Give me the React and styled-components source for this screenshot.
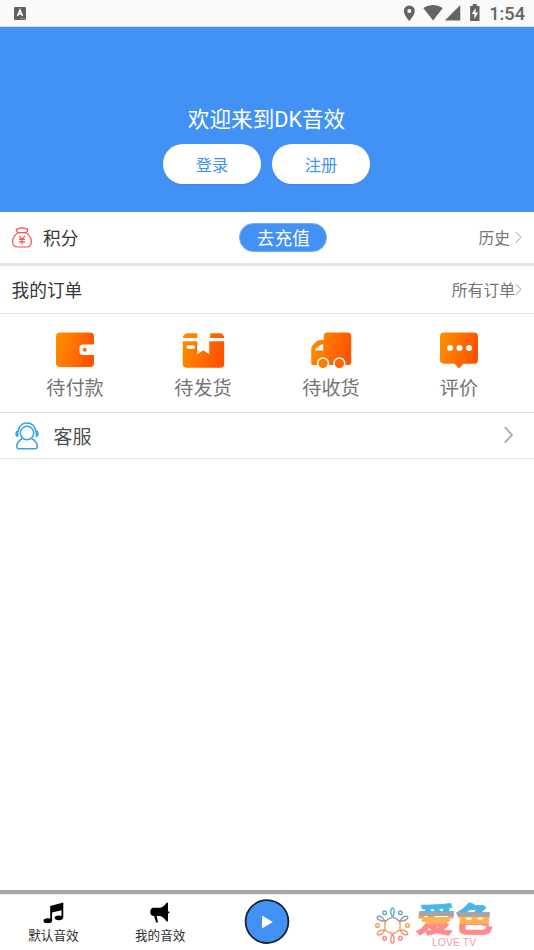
import React from "react";
import styled, { createGlobalStyle } from "styled-components";

const GlobalStyle = createGlobalStyle`
  * { box-sizing: border-box; }
  body {
    margin: 0;
    background: #fff;
    font-family: Roboto, "Noto Sans CJK SC", sans-serif;
  }
  svg { display: block; flex: none; overflow: visible; }
`;

const Screen = styled.div`
  width: 534px;
  height: 950px;
  display: flex;
  flex-direction: column;
  overflow: hidden;
  background: #fff;
`;

const StatusBar = styled.div`
  height: 27px;
  flex: none;
  display: flex;
  align-items: center;
  justify-content: space-between;
  padding: 0 9px 0 14px;
  background: #fafafa;
  border-bottom: 1px solid #d5dce5;
`;

const StatusIcons = styled.div`
  display: flex;
  align-items: center;
`;

const Clock = styled.span`
  margin-left: 8px;
  padding-top: 2px;
  font-size: 18.2px;
  line-height: 26px;
  font-weight: 480;
  color: #646464;
`;

const Hero = styled.header`
  height: 185px;
  flex: none;
  display: flex;
  flex-direction: column;
  align-items: center;
  padding: 76px 1px 0 0;
  background: #4292f5;
`;

const Welcome = styled.h1`
  margin: 0;
  height: 41px;
  line-height: 33px;
  font-size: 21.6px;
  font-weight: 400;
  color: #fff;
`;

const HeroActions = styled.div`
  display: flex;
  gap: 11px;
`;

const HeroButton = styled.button`
  width: 98px;
  height: 40px;
  padding: 3px 0 0;
  border: 0;
  border-radius: 20px;
  background: #fff;
  color: #4292f5;
  font: inherit;
  font-size: 16.3px;
  line-height: 24px;
  box-shadow: 0 1px 1px rgba(20, 70, 150, 0.12);
`;

const Row = styled.div`
  height: ${(p) => p.$height}px;
  flex: none;
  display: flex;
  align-items: center;
  padding: 0 ${(p) => p.$right || 12}px 0 ${(p) => p.$left || 12}px;
  border-bottom: ${(p) => p.$line || 1}px solid #e5e5e5;
`;

const RowLabel = styled.span`
  font-size: ${(p) => p.$size || 17.7}px;
  line-height: 28px;
  padding-top: ${(p) => p.$drop || 2}px;
  color: ${(p) => p.$color || "#363636"};
  margin-left: ${(p) => p.$gap || 0}px;
`;

const TopUp = styled.button`
  width: 88px;
  height: 29px;
  margin-left: 161px;
  padding: 2px 0 0;
  border: 1px solid #76acef;
  border-radius: 15px;
  background: #4292f5;
  color: #fff;
  font: inherit;
  font-size: 17.7px;
  line-height: 26px;
`;

const RowLink = styled.span`
  display: flex;
  align-items: center;
  gap: ${(p) => p.$gap}px;
  margin-left: auto;
  color: #747474;
`;

const LinkText = styled.span`
  padding-top: 3px;
  font-size: 15.8px;
  line-height: 24px;
`;

const Orders = styled.div`
  height: 99px;
  flex: none;
  display: grid;
  grid-template-columns: repeat(4, 128px);
  padding: 14px 11px 0;
  border-bottom: 1px solid #e0e0e0;
`;

const OrderItem = styled.div`
  display: flex;
  flex-direction: column;
  align-items: center;
  font-size: 19.2px;
  line-height: 28px;
  color: #757575;
`;

const OrderLabel = styled.span`
  margin-top: 3px;
`;

const TabBar = styled.nav`
  height: 60px;
  margin-top: auto;
  flex: none;
  display: grid;
  grid-template-columns: repeat(3, 106.8px) 1fr;
  border-top: 4px solid #a8a8a8;
  box-shadow: inset 0 1px #e6e6e6;
`;

const Tab = styled.div`
  display: flex;
  flex-direction: column;
  align-items: center;
  padding-top: ${(p) => p.$top}px;
  font-size: 12.6px;
  line-height: 20px;
  color: #303030;
`;

const TabLabel = styled.span`
  margin-top: 2px;
`;

const LogoSlot = styled.div`
  padding: 6px 0 0 53.6px;
`;

const Arrow = ({ w = 7, h = 12, stroke = "#999", sw = 1 }) => (
  <svg width={w} height={h} viewBox={`0 .6 ${w} ${h}`} fill="none" stroke={stroke} strokeWidth={sw}>
    <path d={`M.8.7 ${w - 1} ${h / 2} .8 ${h - 0.7}`} />
  </svg>
);

const OrangeFill = ({ id }) => (
  <defs>
    <linearGradient id={id} x1="0" y1="0" x2="1" y2="0.25">
      <stop stopColor="#ff9200" />
      <stop offset="1" stopColor="#ff5500" />
    </linearGradient>
  </defs>
);

const Wallet = () => (
  <svg width="44" height="44" viewBox="0 0 44 44">
    <OrangeFill id="wallet" />
    <rect x="3" y="4.500" width="38" height="34.500" rx="4" fill="url(#wallet)" />
    <path d="M41.500 16.500H30q-3.500 0-3.500 3.500v3.500q0 3.500 3.500 3.500h11.500Z" fill="#fff" />
    <circle cx="31.700" cy="21.700" r="2" fill="#ff7100" />
  </svg>
);

const Parcel = () => (
  <svg width="44" height="44" viewBox="-.7 .3 44 44">
    <OrangeFill id="parcel" />
    <path fill="url(#parcel)" d="M1 10.300q1-4.800 5-4.800h9.500v4.800ZM28.500 5.500H38q4 0 4.500 4.800h-14ZM1 13.500h14.500v13l6-4 6 4v-13h15V36q0 4-4 4H5q-4 0-4-4Z" />
    <rect x="5" y="17.500" width="8" height="3.500" rx="1" fill="#fff" />
  </svg>
);

const Truck = () => (
  <svg width="44" height="44" viewBox="-.7 .5 44 44">
    <OrangeFill id="truck" />
    <path fill="url(#truck)" d="M14 8.500Q14 5 17.500 5H38q3.500 0 3.500 3.500V34q0 3.500-3 3.500H3q-1.500 0-1.500-1.500V22q0-3 2-5l3-3q1.500-1.500 4-1.500H14Z" />
    <path fill="#fff" d="m5.500 21.500 6-4.500h2v6h-7q-2 0-1-1.500Z" />
    <circle cx="13.300" cy="36" r="6.200" fill="#fff" /><circle cx="29.700" cy="36" r="6.200" fill="#fff" />
    <circle cx="13.300" cy="36" r="4.700" fill="#ff8000" /><circle cx="29.700" cy="36" r="4.700" fill="#ff6900" />
  </svg>
);

const Review = () => (
  <svg width="44" height="44" viewBox="0 0 44 44">
    <OrangeFill id="review" />
    <path fill="url(#review)" d="M7 4.500h30q4 0 4 4V32q0 3.800-4 3.800H26.500L22 40.500l-4.500-4.700H7q-4 0-4-3.800V8.500q0-4 4-4Z" />
    <g fill="#fff"><circle cx="13" cy="20" r="3" /><circle cx="22.500" cy="20" r="3" /><circle cx="32" cy="20" r="3" /></g>
  </svg>
);

const MoneyBag = () => (
  <svg width="20" height="22" viewBox="0 .7 20 22" fill="none" stroke="#f45252" strokeWidth="1.200">
    <path d="M6 6.300Q3 3.700 5 2.600Q6.500 3.200 7.200 1.700Q9 2.600 10 1Q11 2.600 12.800 1.700Q13.500 3.200 15 2.600Q17 3.700 14 6.300ZM6.200 6.500C3 8.500.6 12 .6 15.500c0 4 2 5.200 5 5.200h8.800c3 0 5-1.200 5-5.200 0-3.500-2.400-7-5.600-9" />
    <path d="m7 9.500 3 3.500 3-3.500M7 13h6M7 15.500h6M10 13v5" />
  </svg>
);

const Support = () => (
  <svg width="24" height="28" viewBox="0 0 24 28" fill="none" stroke="#35a5e0" strokeWidth="1.500">
    <circle cx="12" cy="11" r="6.700" />
    <path d="M3 10C4 3.500 8 1 12 1s8 2.500 9 9M7.500 16.500C3.500 18.500 1.800 21.500 1.800 24.500q0 2.300 2 2.300h16.400q2 0 2-2.300c0-3-1.700-6-5.700-8" />
    <path d="M2.700 9v5C.5 14 .5 10 2.700 9ZM21.300 9v5C23.500 14 23.500 10 21.300 9Z" />
  </svg>
);

const Music = () => (
  <svg width="22" height="22" viewBox="-1.500 -.3 22 22">
    <path d="M6.700 3.700 19.800.3V15.500H18V8L8.600 10.300V19H6.700Z" />
    <ellipse cx="4.300" cy="18.500" rx="4.300" ry="2.500" /><ellipse cx="15.400" cy="15.500" rx="4.200" ry="2.400" />
  </svg>
);

const Megaphone = () => (
  <svg width="22" height="22" viewBox="-.5 0 22 22">
    <path d="M4 5.800h6.500Q14.500 5 17 .8h1.500v8.400q3 1 0 2.600v7.700H17q-2.500-4.500-6.500-5.500H7.200l1.300 6.500H6.700L4.500 14Q.8 14 .8 10T4 5.800Z" />
  </svg>
);

const PlayButton = () => (
  <svg width="46" height="46" viewBox="0 .4 46 46">
    <circle cx="23" cy="23" r="21.400" fill="#4292f5" stroke="#182331" strokeWidth="1.800" />
    <path d="M18 16.800v13.200L28.800 23.300Z" fill="#fff" />
  </svg>
);

const petalAngles = [0, 60, 120, 180, 240, 300];

const polar = (deg, r) => {
  const t = (deg * Math.PI) / 180;
  return `${(18.5 + r * Math.sin(t)).toFixed(2)} ${(25.5 - r * Math.cos(t)).toFixed(2)}`;
};

const petalPath = (a) =>
  `M${polar(a - 30, 8)}Q${polar(a, 7)} ${polar(a + 7, 12)}C${polar(a + 9, 15)} ${polar(a + 4, 17.5)} ${polar(a, 17.5)}C${polar(a - 4, 17.5)} ${polar(a - 9, 15)} ${polar(a - 7, 12)}Q${polar(a, 7)} ${polar(a + 30, 8)}`;

const BrandLogo = () => (
  <svg width="124" height="48" viewBox="0 0 124 48">
    <defs>
      <linearGradient id="brand" gradientUnits="userSpaceOnUse" x1="0" y1="-30" x2="0" y2="3">
        <stop offset="0" stopColor="#4ab5ea" /><stop offset=".26" stopColor="#4ab5ea" />
        <stop offset=".28" stopColor="#a3a3a8" /><stop offset=".42" stopColor="#a3a3a8" />
        <stop offset=".44" stopColor="#ffb04f" /><stop offset=".66" stopColor="#ffb04f" />
        <stop offset=".68" stopColor="#ff8c8c" /><stop offset="1" stopColor="#ff8c8c" />
      </linearGradient>
      <linearGradient id="mark" gradientUnits="userSpaceOnUse" x1="0" y1="8" x2="0" y2="43">
        <stop offset=".14" stopColor="#55b5df" /><stop offset=".26" stopColor="#9c9da2" />
        <stop offset=".36" stopColor="#9c9da2" /><stop offset=".46" stopColor="#f0aa55" />
        <stop offset=".66" stopColor="#f5a45e" /><stop offset=".78" stopColor="#ff8790" />
      </linearGradient>
    </defs>
    <g fill="none" stroke="url(#mark)" strokeWidth="1.500">
      {petalAngles.map((a) => <path key={a} d={petalPath(a)} />)}
      <circle cx="10.700" cy="12.700" r="1.800" /><circle cx="26.300" cy="12.700" r="1.800" />
      <circle cx="3.500" cy="25.500" r="1.800" /><circle cx="33.500" cy="25.500" r="1.800" />
      <circle cx="10.700" cy="38.300" r="1.800" /><circle cx="26.300" cy="38.300" r="1.800" />
    </g>
    <text transform="translate(41.500 31.500) skewX(-5) scale(1.070 .94)" fontFamily="Noto Sans CJK SC, sans-serif" fontSize="36" fontWeight="900" fill="url(#brand)" stroke="url(#brand)" strokeWidth=".8">爱色</text>
    <text x="58" y="45.800" fontFamily="Liberation Sans, sans-serif" fontSize="10.300" textLength="44" fill="#f59b9f">LOVE TV</text>
  </svg>
);

const orders = [
  { label: "待付款", Icon: Wallet },
  { label: "待发货", Icon: Parcel },
  { label: "待收货", Icon: Truck },
  { label: "评价", Icon: Review },
];

export default function App() {
  return (
    <Screen>
      <GlobalStyle />
      <StatusBar>
        <svg width="12" height="14" viewBox="0 0 12 14">
          <rect y="1" width="12" height="13" rx="1" fill="#606060" />
          <path d="m3.500 10 2.500-6 2.500 6M4.500 8h3" fill="none" stroke="#fff" strokeWidth="1.500" />
          <path d="M6.500 12.500H11" stroke="#ddd" strokeWidth=".8" strokeDasharray="1 .7" />
        </svg>
        <StatusIcons>
          <svg width="80" height="18" viewBox="-.8 0 80 18" fill="#646464">
            <path fillRule="evenodd" d="M7.500 1.500A5.400 5.400 0 0 0 2 7c0 4 5.500 10 5.500 10S13 11 13 7a5.400 5.400 0 0 0-5.500-5.500Zm0 3.500a2 2 0 1 1 0 4 2 2 0 0 1 0-4Z" />
            <path d="M21.500 4Q31-2 41 4l-9.700 12.500ZM43 16.500 58.500 1v15.500Z" />
            <path fillRule="evenodd" d="M71 0h4v2h2.700v15h-9.400V2H71Zm2.800 4-4 6h2.700v5l4-6.500h-2.700Z" />
          </svg>
          <Clock>1:54</Clock>
        </StatusIcons>
      </StatusBar>
      <Hero>
        <Welcome>欢迎来到DK音效</Welcome>
        <HeroActions>
          <HeroButton>登录</HeroButton>
          <HeroButton>注册</HeroButton>
        </HeroActions>
      </Hero>
      <Row $height={54} $line={3}>
        <MoneyBag />
        <RowLabel $gap={11}>积分</RowLabel>
        <TopUp>去充值</TopUp>
        <RowLink $gap={5}><LinkText>历史</LinkText><Arrow /></RowLink>
      </Row>
      <Row $height={48} $left={11.5}>
        <RowLabel>我的订单</RowLabel>
        <RowLink $gap={0}><LinkText>所有订单</LinkText><Arrow /></RowLink>
      </Row>
      <Orders>
        {orders.map(({ label, Icon }) => (
          <OrderItem key={label}>
            <Icon />
            <OrderLabel>{label}</OrderLabel>
          </OrderItem>
        ))}
      </Orders>
      <Row $height={46} $left={15} $right={21}>
        <Support />
        <RowLabel $gap={14.5} $size={19} $drop={4} $color="#505050">客服</RowLabel>
        <RowLink $gap={0}><Arrow w={9} h={17} stroke="#aaa" sw={1.8} /></RowLink>
      </Row>
      <TabBar>
        <Tab $top={8}><Music /><TabLabel>默认音效</TabLabel></Tab>
        <Tab $top={8}><Megaphone /><TabLabel>我的音效</TabLabel></Tab>
        <Tab $top={5}><PlayButton /></Tab>
        <LogoSlot><BrandLogo /></LogoSlot>
      </TabBar>
    </Screen>
  );
}
